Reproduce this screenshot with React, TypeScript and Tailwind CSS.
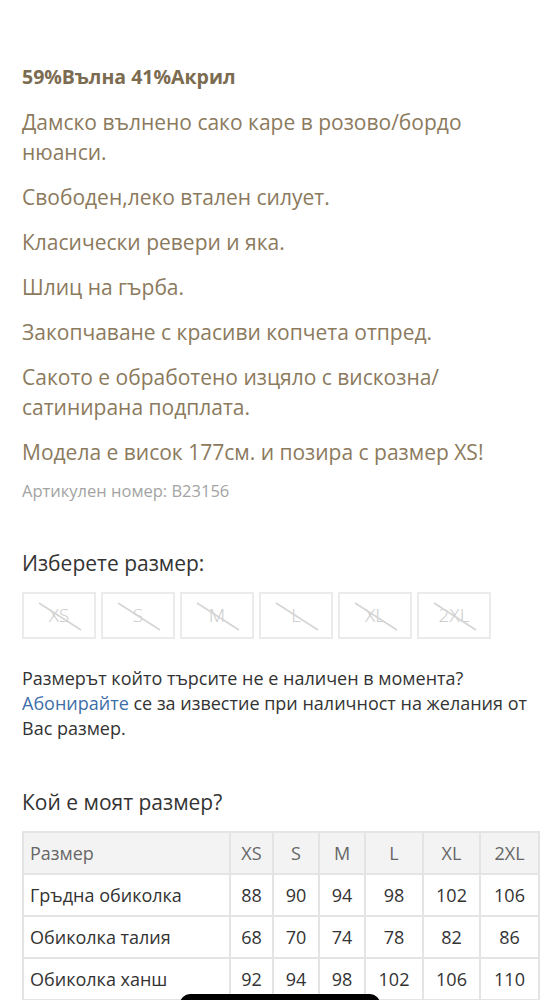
import React from 'react';

const SIZES = ['XS', 'S', 'M', 'L', 'XL', '2XL'];

const ROWS: { label: string; values: number[] }[] = [
  { label: 'Гръдна обиколка', values: [88, 90, 94, 98, 102, 106] },
  { label: 'Обиколка талия', values: [68, 70, 74, 78, 82, 86] },
  { label: 'Обиколка ханш', values: [92, 94, 98, 102, 106, 110] },
];

const DESCRIPTION = [
  'Дамско вълнено сако каре в розово/бордо нюанси.',
  'Свободен,леко втален силует.',
  'Класически ревери и яка.',
  'Шлиц на гърба.',
  'Закопчаване с красиви копчета отпред.',
  'Сакото е обработено изцяло с вискозна/ сатинирана подплата.',
  'Модела е висок 177см. и позира с размер XS!',
];

const SizeBox: React.FC<{ label: string }> = ({ label }) => (
  <div className="relative w-[74px] h-[47px] border-2 border-[#ebebeb] flex items-center justify-center text-[19px] font-light text-[#c8c8c8]">
    <span>{label}</span>
    {/* strike-through for unavailable size */}
    <svg className="absolute inset-0" width="74" height="47" viewBox="0 0 74 47">
      <line x1="15" y1="9" x2="57" y2="36" stroke="#d4d4d4" strokeWidth="1.5" />
    </svg>
  </div>
);

export default function App() {
  return (
    <div className="relative w-[560px] h-[1000px] overflow-hidden bg-white px-[22px] pt-[62px] font-['Open_Sans',sans-serif]">
      {/* Product description */}
      <section>
        <h2 className="text-[19.5px] leading-[30px] font-bold text-[#7b6b50]">59%Вълна 41%Акрил</h2>
        <div className="mt-[15px] space-y-[15px] text-[21px] leading-[30px] text-[#8b7a5d] pr-[40px]">
          {DESCRIPTION.map((line) => (
            <p key={line}>{line}</p>
          ))}
        </div>
        <p className="mt-[13px] text-[16.5px] leading-[22px] text-[#a3a3a3]">Артикулен номер: B23156</p>
      </section>

      {/* Size picker */}
      <section className="mt-[46px]">
        <h3 className="text-[21px] leading-[30px] text-[#333]">Изберете размер:</h3>
        <div className="mt-[14px] flex gap-[5px]">
          {SIZES.map((s) => (
            <SizeBox key={s} label={s} />
          ))}
        </div>
        <p className="mt-[27px] text-[18px] leading-[25px] text-[#333]">
          Размерът който търсите не е наличен в момента?{' '}
          <a className="text-[#3d6fa8]">Абонирайте</a> се за известие при наличност на желания от Вас размер.
        </p>
      </section>

      {/* Size chart */}
      <section className="mt-[46px]">
        <h3 className="text-[21px] leading-[30px] text-[#333]">Кой е моят размер?</h3>
        <table className="mt-[14px] w-[516px] border-collapse border-2 border-[#e4e4e4] text-[18px] text-[#333] table-fixed">
          <colgroup>
            <col className="w-[207px]" />
            <col className="w-[43px]" />
            <col className="w-[46px]" />
            <col className="w-[46px]" />
            <col className="w-[58px]" />
            <col className="w-[57px]" />
            <col className="w-[59px]" />
          </colgroup>
          <thead>
            <tr className="bg-[#f3f3f3] h-[42px] text-[#666]">
              <th className="border-2 border-[#e4e4e4] text-left font-normal pl-[6px]">Размер</th>
              {SIZES.map((s) => (
                <th key={s} className="border-2 border-[#e4e4e4] text-center font-normal">{s}</th>
              ))}
            </tr>
          </thead>
          <tbody>
            {ROWS.map((row) => (
              <tr key={row.label} className="h-[42px]">
                <td className="border-2 border-[#e4e4e4] pl-[6px]">{row.label}</td>
                {row.values.map((v, i) => (
                  <td key={i} className="border-2 border-[#e4e4e4] text-center">{v}</td>
                ))}
              </tr>
            ))}
          </tbody>
        </table>
      </section>

      {/* sticky bar peeking at the bottom */}
      <div className="absolute left-[180px] top-[994px] w-[200px] h-[20px] bg-black rounded-t-[10px]" />
    </div>
  );
}
